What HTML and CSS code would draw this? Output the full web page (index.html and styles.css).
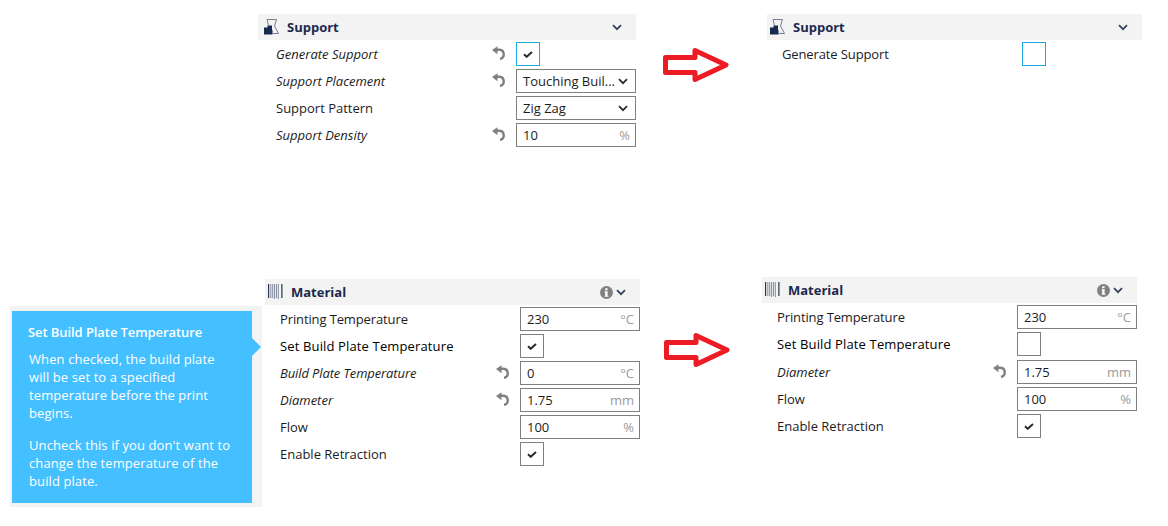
FILE: index.html
```html
<!DOCTYPE html>
<html lang="en">
<head>
<meta charset="utf-8">
<title>Setting visibility</title>
<link rel="stylesheet" href="styles.css">
</head>
<body>
<svg class="defs" width="0" height="0" aria-hidden="true">
  <symbol id="i-support" viewBox="0 0 15 16">
    <path d="M0 15.500V8.500h3.500V6.500h4.500v4.500h.5v4.500z" fill="#16294f"/>
    <path d="M3 .5h9.500L10.500 7l4 7.500H8.500M3 .5l1.500 6" fill="none" stroke="#747f93" stroke-width="1"/>
  </symbol>
  <symbol id="i-material" viewBox="0 0 16 17">
    <path d="M3 0v15M5 0v15M7 0v16M9 0v15M11 0v16" fill="none" stroke="#7d8596" stroke-width="1"/>
    <path d="M.6 0v15M14.800 0v15" fill="none" stroke="#2a3550" stroke-width="1.300"/>
  </symbol>
  <symbol id="i-chev" viewBox="0 0 10 7">
    <path d="M1 1.200 5 5.200l4-4" fill="none" stroke-width="1.700"/>
  </symbol>
  <symbol id="i-reset" viewBox="0 0 14 14">
    <path d="M4.500 3.800H7.500a4.600 4.600 0 0 1 .5 9.100" fill="none" stroke="#808080" stroke-width="2.400"/>
    <path d="M0 4 5.500 .3v7.900z" fill="#808080"/>
  </symbol>
  <symbol id="i-check" viewBox="0 0 10 7">
    <path d="M1 3.300 3.700 5.800 9 1" fill="none" stroke="#2b2b2b" stroke-width="2"/>
  </symbol>
  <symbol id="i-info" viewBox="0 0 13 13">
    <circle cx="6.500" cy="6.500" r="6.500" fill="#808080"/>
    <path d="M5.200 2.300h2.400v1.900H5.200zM5.200 5.300h2.400v4.400h.8v1.100H4.600V9.700h.6V6.400h-.6V5.300z" fill="#fff"/>
  </symbol>
</svg>

<section class="panel panel-a">
  <header class="panel-head">
    <svg class="head-icon"><use href="#i-support"/></svg>
    <h2 class="panel-title">Support</h2>
    <svg class="chev head-chev"><use href="#i-chev"/></svg>
  </header>
  <div class="rows">
    <div class="row">
      <span class="label mod">Generate Support</span>
      <svg class="reset"><use href="#i-reset"/></svg>
      <div class="slot"><span class="check focus"><svg class="tick"><use href="#i-check"/></svg></span></div>
    </div>
    <div class="row">
      <span class="label mod">Support Placement</span>
      <svg class="reset"><use href="#i-reset"/></svg>
      <div class="slot"><div class="field"><span class="value">Touching Buil...</span><svg class="chev"><use href="#i-chev"/></svg></div></div>
    </div>
    <div class="row">
      <span class="label">Support Pattern</span>
      <div class="slot"><div class="field"><span class="value">Zig Zag</span><svg class="chev"><use href="#i-chev"/></svg></div></div>
    </div>
    <div class="row">
      <span class="label mod">Support Density</span>
      <svg class="reset"><use href="#i-reset"/></svg>
      <div class="slot"><div class="field"><span class="value">10</span><span class="unit">%</span></div></div>
    </div>
  </div>
</section>

<section class="panel panel-b">
  <header class="panel-head">
    <svg class="head-icon"><use href="#i-support"/></svg>
    <h2 class="panel-title">Support</h2>
    <svg class="chev head-chev"><use href="#i-chev"/></svg>
  </header>
  <div class="rows">
    <div class="row">
      <span class="label tight">Generate Support</span>
      <div class="slot"><span class="check focus"></span></div>
    </div>
  </div>
</section>

<section class="panel panel-c">
  <header class="panel-head">
    <svg class="head-icon"><use href="#i-material"/></svg>
    <h2 class="panel-title">Material</h2>
    <svg class="info"><use href="#i-info"/></svg>
    <svg class="chev info-chev"><use href="#i-chev"/></svg>
  </header>
  <div class="rows">
    <div class="row">
      <span class="label tight">Printing Temperature</span>
      <div class="slot"><div class="field"><span class="value">230</span><span class="unit">°C</span></div></div>
    </div>
    <div class="row">
      <span class="label hover">Set Build Plate Temperature</span>
      <div class="slot"><span class="check"><svg class="tick"><use href="#i-check"/></svg></span></div>
    </div>
    <div class="row">
      <span class="label mod tight">Build Plate Temperature</span>
      <svg class="reset"><use href="#i-reset"/></svg>
      <div class="slot"><div class="field"><span class="value">0</span><span class="unit">°C</span></div></div>
    </div>
    <div class="row">
      <span class="label mod">Diameter</span>
      <svg class="reset"><use href="#i-reset"/></svg>
      <div class="slot"><div class="field"><span class="value">1.75</span><span class="unit">mm</span></div></div>
    </div>
    <div class="row">
      <span class="label">Flow</span>
      <div class="slot"><div class="field"><span class="value">100</span><span class="unit">%</span></div></div>
    </div>
    <div class="row">
      <span class="label">Enable Retraction</span>
      <div class="slot"><span class="check"><svg class="tick"><use href="#i-check"/></svg></span></div>
    </div>
  </div>
</section>

<section class="panel panel-d">
  <header class="panel-head">
    <svg class="head-icon"><use href="#i-material"/></svg>
    <h2 class="panel-title">Material</h2>
    <svg class="info"><use href="#i-info"/></svg>
    <svg class="chev info-chev"><use href="#i-chev"/></svg>
  </header>
  <div class="rows">
    <div class="row">
      <span class="label tight">Printing Temperature</span>
      <div class="slot"><div class="field"><span class="value">230</span><span class="unit">°C</span></div></div>
    </div>
    <div class="row">
      <span class="label hover">Set Build Plate Temperature</span>
      <div class="slot"><span class="check"></span></div>
    </div>
    <div class="row row-gap">
      <span class="label mod">Diameter</span>
      <svg class="reset"><use href="#i-reset"/></svg>
      <div class="slot"><div class="field"><span class="value">1.75</span><span class="unit">mm</span></div></div>
    </div>
    <div class="row">
      <span class="label">Flow</span>
      <div class="slot"><div class="field"><span class="value">100</span><span class="unit">%</span></div></div>
    </div>
    <div class="row">
      <span class="label">Enable Retraction</span>
      <div class="slot"><span class="check"><svg class="tick"><use href="#i-check"/></svg></span></div>
    </div>
  </div>
</section>

<svg class="arrow arrow-top" viewBox="0 0 68 36">
  <path d="M2.500 10.500H32V3.500L63 18 32 32.500V25.500H2.500z" fill="#fff" stroke="#ed1c24" stroke-width="5" stroke-linejoin="round"/>
</svg>
<svg class="arrow arrow-bottom" viewBox="0 0 68 36">
  <path d="M2.500 10.500H32V3.500L63 18 32 32.500V25.500H2.500z" fill="#fff" stroke="#ed1c24" stroke-width="5" stroke-linejoin="round"/>
</svg>

<aside class="tip">
  <div class="tip-box">
    <h3 class="tip-title">Set Build Plate Temperature</h3>
    <p class="tip-text">When checked, the build plate will be set to a specified temperature before the print begins.</p>
    <p class="tip-text">Uncheck this if you don't want to change the temperature of the build plate.</p>
  </div>
  <span class="tip-arrow"></span>
</aside>
</body>
</html>
```

FILE: styles.css
```css
html, body {
  margin: 0;
  padding: 0;
  background: #fff;
}

body {
  position: relative;
  width: 1168px;
  height: 526px;
  overflow: hidden;
  font-family: "Open Sans", "Noto Sans", sans-serif;
  font-size: 13px;
  color: #1c1c1c;
}

.defs {
  position: absolute;
}

.panel {
  position: absolute;
  display: flex;
  flex-direction: column;
}

.panel-a { left: 258px; top: 14px; width: 378px; }
.panel-b { left: 767px; top: 14px; width: 375px; }
.panel-c { left: 265px; top: 279px; width: 375px; }
.panel-d { left: 762px; top: 277px; width: 375px; }

.panel-head {
  display: flex;
  align-items: center;
  height: 26px;
  background: #f3f3f3;
}

.panel-title {
  margin: 0;
  flex: 1;
  font-size: 13px;
  font-weight: 700;
  color: #1b2a4e;
}

.head-icon {
  width: 15px;
  height: 16px;
  margin: 0 8px 0 3px;
  flex: none;
}

.panel-a .head-icon {
  margin-left: 6px;
}

.chev {
  width: 10px;
  height: 7px;
  flex: none;
  margin-right: 2px;
  stroke: #2a2a2a;
}

.head-chev {
  margin-right: 14px;
  stroke: #34405c;
}

.info {
  width: 13px;
  height: 13px;
  flex: none;
}

.info-chev {
  margin: 0 14px 0 3px;
  stroke: #34405c;
}

.rows {
  display: flex;
  flex-direction: column;
  gap: 3px;
  padding-top: 2px;
}

.row {
  display: flex;
  align-items: center;
  height: 24px;
  padding-left: 15px;
}

.row-gap {
  margin-top: 1px;
}

.panel-a .row {
  padding-left: 18px;
}

.label {
  flex: 1;
  white-space: nowrap;
}

.mod {
  font-style: italic;
}

.tight {
  letter-spacing: -0.12px;
}

.hover {
  color: #000;
  letter-spacing: 0.14px;
}

.reset {
  width: 14px;
  height: 14px;
  margin-right: 10px;
  flex: none;
  position: relative;
  top: -1px;
}

.slot {
  width: 120px;
  flex: none;
}

.check {
  display: flex;
  align-items: center;
  justify-content: center;
  box-sizing: border-box;
  width: 24px;
  height: 24px;
  border: 1px solid #7f7f7f;
  background: #fff;
}

.check.focus {
  border-color: #19a9e0;
}

.tick {
  width: 10px;
  height: 7px;
}

.field {
  display: flex;
  align-items: center;
  justify-content: space-between;
  box-sizing: border-box;
  width: 120px;
  height: 24px;
  padding: 0 5px 0 6px;
  border: 1px solid #7f7f7f;
  background: #fff;
}

.value {
  white-space: nowrap;
}

.unit {
  color: #9a9a9a;
}

.arrow {
  position: absolute;
  width: 68px;
  height: 36px;
}

.arrow-top { left: 663px; top: 47px; }
.arrow-bottom { left: 664px; top: 332px; }

.tip {
  position: absolute;
  left: 10px;
  top: 306px;
  box-sizing: border-box;
  width: 252px;
  height: 201px;
  padding: 5px 10px 4px 2px;
  background: #f3f3f3;
}

.tip-box {
  box-sizing: border-box;
  height: 192px;
  padding: 12px 20px 0 16px;
  background: #44bfff;
  color: #fff;
}

.tip-title {
  margin: 0 0 9px;
  font-size: 13px;
  font-weight: 600;
  line-height: 18px;
  letter-spacing: -0.08px;
}

.tip-text {
  margin: 0 0 14px 1px;
  font-size: 13px;
  line-height: 18px;
  letter-spacing: 0.1px;
}

.tip-arrow {
  position: absolute;
  left: 242px;
  top: 32px;
  width: 0;
  height: 0;
  border-top: 9px solid transparent;
  border-bottom: 9px solid transparent;
  border-left: 9px solid #44bfff;
}
```
